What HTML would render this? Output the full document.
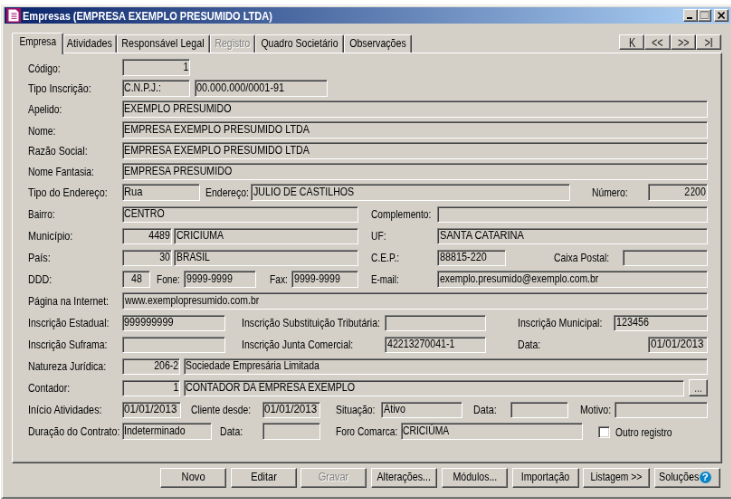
<!DOCTYPE html>
<html lang="pt-BR">
<head>
<meta charset="utf-8">
<title>Empresas (EMPRESA EXEMPLO PRESUMIDO LTDA)</title>
<style>
html,body{margin:0;padding:0;background:#fff;}
body{width:731px;height:499px;overflow:hidden;position:relative;font-family:"Liberation Sans",sans-serif;}
#scale{position:absolute;left:0;top:0;width:807.73px;height:551.38px;transform:scale(0.905);transform-origin:0 0;will-change:transform;}
#win{position:absolute;left:1.33px;top:4.86px;width:810.4px;height:546.19px;background:#d4d0c8;
 box-sizing:border-box;border:1px solid;border-color:#e8e6e0 #404040 #404040 #e8e6e0;
 box-shadow:inset 1px 1px 0 #fff, inset -1px -1px 0 #808080;}
#title{position:absolute;left:4.53px;top:8.18px;width:802.1px;height:18.12px;
 background:linear-gradient(to right,#0a246a 0%,#a6caf0 94%);}
#title .tt{position:absolute;left:20.22px;top:1.8px;color:#fff;font-weight:bold;font-size:12.5px;line-height:16px;white-space:nowrap;
 transform:scaleX(0.883);transform-origin:0 50%;}
#icon{position:absolute;left:2.32px;top:1px;width:16px;height:16px;}
.cap{position:absolute;top:1.76px;width:15.8px;height:13.92px;background:#d4d0c8;box-sizing:border-box;
 border:1px solid;border-color:#fff #404040 #404040 #fff;box-shadow:inset -1px -1px 0 #808080;}
.cap svg{position:absolute;left:0;top:0;}
.t{position:absolute;font-size:13.4px;line-height:16px;height:16px;white-space:nowrap;color:#000;
 transform:scaleX(0.765);transform-origin:0 50%;}
.t.ft{transform:scaleX(0.79);}
.t.r{transform-origin:100% 50%;}
.f{position:absolute;box-sizing:border-box;background:#d4d0c8;border:1px solid;border-width:1px 1.6px 1.6px 1px;border-color:#808080 #fff #fff #808080;
 box-shadow:inset 1px 1px 0 #404040;}
.cb{position:absolute;box-sizing:border-box;width:13px;height:13px;background:#fff;border:1px solid;border-color:#808080 #fff #fff #808080;
 box-shadow:inset 1px 1px 0 #404040, inset -1px -1px 0 #d4d0c8;}
.btn{position:absolute;box-sizing:border-box;background:#d4d0c8;border:1px solid;border-color:#fff #404040 #404040 #fff;
 box-shadow:inset -1px -1px 0 #808080;display:flex;justify-content:center;align-items:flex-start;}
.bt{flex:none;display:inline-block;position:relative;font-size:13.4px;line-height:16px;white-space:nowrap;transform:scaleX(0.765);transform-origin:50% 50%;color:#000;}
.btn .bt{top:1.5px;}
.btn.dis .bt,.tab.dis .bt{color:#808080;text-shadow:1px 1px 0 #fff;}
.nav .bt{top:-0.2px;font-size:14px;color:#222;}
.pipe{display:inline-block;font-size:10.8px;font-weight:bold;position:relative;top:-2.1px;margin-left:0.6px;}
.tab{position:absolute;box-sizing:border-box;background:#d4d0c8;border:1px solid;border-color:#fff #404040 transparent #fff;border-bottom:0;
 border-radius:2px 2px 0 0;box-shadow:inset -1px 0 0 #808080;display:flex;justify-content:center;align-items:flex-start;}
.tab .bt{top:1px;}
.tab.act{z-index:3;}
.tab.act .bt{top:1.8px;}
#panel{position:absolute;left:13.15px;top:58.45px;width:784.42px;height:453.7px;box-sizing:border-box;
 border:1px solid;border-color:#fff #404040 #404040 #fff;box-shadow:inset -1px -1px 0 #808080;z-index:2;}
.help{position:absolute;left:49.2px;top:3.8px;width:13px;height:13px;border-radius:50%;background:#0c86c9;color:#fff;font-weight:bold;font-size:11.5px;line-height:13.5px;text-align:center;}
</style>
</head>
<body>
<div id="scale">
<div id="win"></div>
<div id="title">
<svg id="icon" viewBox="0 0 16 16"><rect x="0" y="0" width="16" height="16" fill="#a4126a"/><path d="M2.5 1.5h8l3 3v10h-11z" fill="#fff"/><path d="M5.5 5.5h6M5.5 7.5h6M5.5 9.5h6M5.5 11.5h6" stroke="#b8438c" stroke-width="1.2"/></svg>
<div class="tt">Empresas (EMPRESA EXEMPLO PRESUMIDO LTDA)</div>
<div class="cap" style="left:750.39px"><svg width="14" height="12" viewBox="0 0 14 12"><rect x="3" y="8" width="6" height="2" fill="#000"/></svg></div>
<div class="cap" style="left:766.08px"><svg width="14" height="12" viewBox="0 0 14 12"><path d="M2.5 2h9v8h-9z" fill="none" stroke="#fff" stroke-width="1"/><path d="M2 1.5h9v8h-9z" fill="none" stroke="#808080" stroke-width="1"/><rect x="2" y="1" width="9" height="1.6" fill="#808080"/></svg></div>
<div class="cap" style="left:784.31px"><svg width="14" height="12" viewBox="0 0 14 12"><path d="M3.5 2.5l7 7M10.5 2.5l-7 7" stroke="#000" stroke-width="1.7"/></svg></div>
</div>
<div class="tab act" style="left:13.15px;top:35.69px;width:56.68px;height:24.2px"><span class="bt" style="transform:scaleX(0.7542)">Empresa</span></div>
<div class="tab" style="left:69.83px;top:38.12px;width:59.01px;height:20.33px"><span class="bt" style="transform:scaleX(0.8114)">Atividades</span></div>
<div class="tab" style="left:128.84px;top:38.12px;width:102.98px;height:20.33px"><span class="bt" style="transform:scaleX(0.8037)">Responsável Legal</span></div>
<div class="tab dis" style="left:231.82px;top:38.12px;width:50.61px;height:20.33px"><span class="bt" style="transform:scaleX(0.7773)">Registro</span></div>
<div class="tab" style="left:282.43px;top:38.12px;width:97.46px;height:20.33px"><span class="bt" style="transform:scaleX(0.7888)">Quadro Societário</span></div>
<div class="tab" style="left:379.89px;top:38.12px;width:75.14px;height:20.33px"><span class="bt" style="transform:scaleX(0.7922)">Observações</span></div>
<div id="panel"></div>
<div id="content" style="position:absolute;left:0;top:0;width:807.73px;height:551.38px;z-index:4">
<div class="t " style="left:31.27px;top:67.54px;transform:scaleX(0.7703);">Código:</div>
<div class="f" style="left:134.81px;top:65.36px;width:75.25px;height:18.67px"></div>
<div class="t r ft" style="right:599.55px;top:65.89px;">1</div>
<div class="t " style="left:31.27px;top:90.47px;transform:scaleX(0.8048);">Tipo Inscrição:</div>
<div class="f" style="left:134.81px;top:88.29px;width:75.25px;height:18.67px"></div>
<div class="t ft" style="left:137.46px;top:88.82px;">C.N.P.J.:</div>
<div class="f" style="left:214.59px;top:88.29px;width:147.18px;height:18.67px"></div>
<div class="t ft" style="left:217.24px;top:88.82px;transform:scaleX(0.8096);">00.000.000/0001-91</div>
<div class="t " style="left:31.27px;top:113.35px;transform:scaleX(0.7712);">Apelido:</div>
<div class="f" style="left:134.81px;top:111.16px;width:646.85px;height:18.67px"></div>
<div class="t ft" style="left:137.46px;top:111.69px;transform:scaleX(0.7922);">EXEMPLO PRESUMIDO</div>
<div class="t " style="left:31.27px;top:136.5px;transform:scaleX(0.7699);">Nome:</div>
<div class="f" style="left:134.81px;top:134.31px;width:646.85px;height:18.67px"></div>
<div class="t ft" style="left:137.46px;top:134.84px;transform:scaleX(0.8037);">EMPRESA EXEMPLO PRESUMIDO LTDA</div>
<div class="t " style="left:31.27px;top:159.42px;transform:scaleX(0.7939);">Razão Social:</div>
<div class="f" style="left:134.81px;top:157.24px;width:646.85px;height:18.67px"></div>
<div class="t ft" style="left:137.46px;top:157.77px;transform:scaleX(0.8037);">EMPRESA EXEMPLO PRESUMIDO LTDA</div>
<div class="t " style="left:31.27px;top:182.35px;transform:scaleX(0.7722);">Nome Fantasia:</div>
<div class="f" style="left:134.81px;top:180.17px;width:646.85px;height:18.67px"></div>
<div class="t ft" style="left:137.46px;top:180.69px;transform:scaleX(0.7973);">EMPRESA PRESUMIDO</div>
<div class="t " style="left:31.27px;top:205.28px;transform:scaleX(0.8048);">Tipo do Endereço:</div>
<div class="f" style="left:134.81px;top:203.09px;width:86.07px;height:18.67px"></div>
<div class="t ft" style="left:137.46px;top:203.62px;transform:scaleX(0.8361);">Rua</div>
<div class="t " style="left:226.52px;top:205.28px;transform:scaleX(0.785);">Endereço:</div>
<div class="f" style="left:277.35px;top:203.09px;width:352.37px;height:18.67px"></div>
<div class="t ft" style="left:280.0px;top:203.62px;transform:scaleX(0.7949);">JULIO DE CASTILHOS</div>
<div class="t " style="left:653.92px;top:205.28px;transform:scaleX(0.772);">Número:</div>
<div class="f" style="left:716.24px;top:203.09px;width:65.42px;height:18.67px"></div>
<div class="t r ft" style="right:27.95px;top:203.62px;">2200</div>
<div class="t " style="left:31.27px;top:229.31px;transform:scaleX(0.7475);">Bairro:</div>
<div class="f" style="left:134.81px;top:227.57px;width:261.43px;height:18.67px"></div>
<div class="t ft" style="left:137.46px;top:228.1px;transform:scaleX(0.789);">CENTRO</div>
<div class="t " style="left:409.72px;top:229.31px;transform:scaleX(0.7621);">Complemento:</div>
<div class="f" style="left:483.09px;top:227.57px;width:298.57px;height:18.67px"></div>
<div class="t " style="left:31.27px;top:253.35px;transform:scaleX(0.8087);">Município:</div>
<div class="f" style="left:134.81px;top:251.6px;width:55.13px;height:18.67px"></div>
<div class="t r ft" style="right:619.66px;top:252.13px;">4489</div>
<div class="f" style="left:192.49px;top:251.6px;width:203.75px;height:18.67px"></div>
<div class="t ft" style="left:195.14px;top:252.13px;transform:scaleX(0.7855);">CRICIUMA</div>
<div class="t " style="left:409.72px;top:253.35px;">UF:</div>
<div class="f" style="left:483.09px;top:251.6px;width:298.57px;height:18.67px"></div>
<div class="t ft" style="left:485.75px;top:252.13px;transform:scaleX(0.8275);">SANTA CATARINA</div>
<div class="t " style="left:31.27px;top:277.38px;transform:scaleX(0.8142);">País:</div>
<div class="f" style="left:134.81px;top:275.64px;width:55.13px;height:18.67px"></div>
<div class="t r ft" style="right:619.66px;top:276.16px;">30</div>
<div class="f" style="left:192.49px;top:275.64px;width:203.75px;height:18.67px"></div>
<div class="t ft" style="left:195.14px;top:276.16px;transform:scaleX(0.7742);">BRASIL</div>
<div class="t " style="left:409.72px;top:277.38px;">C.E.P.:</div>
<div class="f" style="left:483.09px;top:275.64px;width:75.58px;height:18.67px"></div>
<div class="t ft" style="left:485.75px;top:276.16px;transform:scaleX(0.8087);">88815-220</div>
<div class="t " style="left:611.6px;top:277.38px;transform:scaleX(0.7754);">Caixa Postal:</div>
<div class="f" style="left:688.07px;top:275.64px;width:93.59px;height:18.67px"></div>
<div class="t " style="left:31.27px;top:301.14px;transform:scaleX(0.8029);">DDD:</div>
<div class="f" style="left:134.81px;top:299.39px;width:30.83px;height:18.67px"></div>
<div class="t ft" style="left:150.5px;top:299.92px;transform-origin:50% 50%;transform:translateX(-50%) scaleX(0.79);">48</div>
<div class="t " style="left:173.48px;top:301.14px;transform:scaleX(0.7546);">Fone:</div>
<div class="f" style="left:203.31px;top:299.39px;width:79.67px;height:18.67px"></div>
<div class="t ft" style="left:205.97px;top:299.92px;transform:scaleX(0.7932);">9999-9999</div>
<div class="t " style="left:297.79px;top:301.14px;">Fax:</div>
<div class="f" style="left:322.1px;top:299.39px;width:74.14px;height:18.67px"></div>
<div class="t ft" style="left:324.75px;top:299.92px;transform:scaleX(0.7932);">9999-9999</div>
<div class="t " style="left:409.72px;top:301.14px;transform:scaleX(0.7368);">E-mail:</div>
<div class="f" style="left:483.09px;top:299.39px;width:298.57px;height:18.67px"></div>
<div class="t ft" style="left:485.75px;top:299.92px;transform:scaleX(0.7764);">exemplo.presumido@exemplo.com.br</div>
<div class="t " style="left:31.27px;top:325.17px;transform:scaleX(0.7865);">Página na Internet:</div>
<div class="f" style="left:134.81px;top:323.43px;width:646.85px;height:18.67px"></div>
<div class="t ft" style="left:138.45px;top:323.95px;transform:scaleX(0.7808);">www.exemplopresumido.com.br</div>
<div class="t " style="left:31.27px;top:348.93px;transform:scaleX(0.7915);">Inscrição Estadual:</div>
<div class="f" style="left:134.81px;top:347.62px;width:114.47px;height:18.67px"></div>
<div class="t ft" style="left:137.46px;top:348.15px;transform:scaleX(0.8138);">999999999</div>
<div class="t " style="left:266.63px;top:348.93px;transform:scaleX(0.7909);">Inscrição Substituição Tributária:</div>
<div class="f" style="left:425.08px;top:347.62px;width:112.38px;height:18.67px"></div>
<div class="t " style="left:572.15px;top:348.93px;transform:scaleX(0.7944);">Inscrição Municipal:</div>
<div class="f" style="left:678.12px;top:347.62px;width:103.54px;height:18.67px"></div>
<div class="t ft" style="left:680.77px;top:348.15px;transform:scaleX(0.8056);">123456</div>
<div class="t " style="left:31.27px;top:372.96px;transform:scaleX(0.7834);">Inscrição Suframa:</div>
<div class="f" style="left:134.81px;top:371.66px;width:114.47px;height:18.67px"></div>
<div class="t " style="left:266.63px;top:372.96px;transform:scaleX(0.781);">Inscrição Junta Comercial:</div>
<div class="f" style="left:425.08px;top:371.66px;width:112.38px;height:18.67px"></div>
<div class="t ft" style="left:427.73px;top:372.19px;transform:scaleX(0.7932);">42213270041-1</div>
<div class="t " style="left:572.15px;top:372.96px;transform:scaleX(0.7901);">Data:</div>
<div class="f" style="left:716.46px;top:371.66px;width:65.2px;height:18.67px"></div>
<div class="t ft" style="left:719.12px;top:372.19px;transform:scaleX(0.8716);">01/01/2013</div>
<div class="t " style="left:31.27px;top:397.27px;transform:scaleX(0.7936);">Natureza Jurídica:</div>
<div class="f" style="left:134.81px;top:395.52px;width:64.2px;height:18.67px"></div>
<div class="t r ft" style="right:610.6px;top:396.05px;">206-2</div>
<div class="f" style="left:202.76px;top:395.52px;width:578.9px;height:18.67px"></div>
<div class="t ft" style="left:205.41px;top:396.05px;transform:scaleX(0.7789);">Sociedade Empresária Limitada</div>
<div class="t " style="left:31.27px;top:421.3px;transform:scaleX(0.783);">Contador:</div>
<div class="f" style="left:134.81px;top:419.56px;width:64.2px;height:18.67px"></div>
<div class="t r ft" style="right:610.6px;top:420.09px;">1</div>
<div class="f" style="left:202.76px;top:419.56px;width:553.48px;height:18.67px"></div>
<div class="t ft" style="left:205.41px;top:420.09px;transform:scaleX(0.7989);">CONTADOR DA EMPRESA EXEMPLO</div>
<div class="t " style="left:31.27px;top:445.33px;transform:scaleX(0.812);">Início Atividades:</div>
<div class="f" style="left:134.81px;top:443.59px;width:64.75px;height:18.67px"></div>
<div class="t ft" style="left:137.46px;top:444.12px;transform:scaleX(0.8732);">01/01/2013</div>
<div class="t " style="left:210.5px;top:445.33px;transform:scaleX(0.7726);">Cliente desde:</div>
<div class="f" style="left:289.72px;top:443.59px;width:63.98px;height:18.67px"></div>
<div class="t ft" style="left:292.38px;top:444.12px;transform:scaleX(0.8699);">01/01/2013</div>
<div class="t " style="left:370.72px;top:445.33px;transform:scaleX(0.7792);">Situação:</div>
<div class="f" style="left:420.99px;top:443.59px;width:89.73px;height:18.67px"></div>
<div class="t ft" style="left:423.65px;top:444.12px;transform:scaleX(0.8012);">Ativo</div>
<div class="t " style="left:522.65px;top:445.33px;transform:scaleX(0.8073);">Data:</div>
<div class="f" style="left:563.54px;top:443.59px;width:64.19px;height:18.67px"></div>
<div class="t " style="left:640.88px;top:445.33px;transform:scaleX(0.7905);">Motivo:</div>
<div class="f" style="left:678.9px;top:443.59px;width:102.76px;height:18.67px"></div>
<div class="t " style="left:31.27px;top:469.09px;transform:scaleX(0.7917);">Duração do Contrato:</div>
<div class="f" style="left:134.81px;top:467.35px;width:99.33px;height:18.67px"></div>
<div class="t ft" style="left:137.46px;top:467.88px;transform:scaleX(0.7894);">Indeterminado</div>
<div class="t " style="left:242.54px;top:469.09px;transform:scaleX(0.7901);">Data:</div>
<div class="f" style="left:289.72px;top:467.35px;width:63.98px;height:18.67px"></div>
<div class="t " style="left:370.72px;top:469.09px;">Foro Comarca:</div>
<div class="f" style="left:442.76px;top:467.35px;width:201.55px;height:18.67px"></div>
<div class="t ft" style="left:445.41px;top:467.88px;transform:scaleX(0.7738);">CRICIÚMA</div>
<div class="cb" style="left:660.99px;top:470.94px"></div>
<div class="t " style="left:680.22px;top:469.64px;transform:scaleX(0.7634);">Outro registro</div>
<div class="btn" style="left:760.88px;top:419.45px;width:20.67px;height:19.0px"><span class="bt" style="top:1px;color:#333">...</span></div>
</div>
<div class="btn nav" style="left:684.42px;top:38.12px;width:28.07px;height:16.91px"><span class="bt">K</span></div>
<div class="btn nav" style="left:712.49px;top:38.12px;width:28.17px;height:16.91px"><span class="bt">&lt;&lt;</span></div>
<div class="btn nav" style="left:740.66px;top:38.12px;width:28.07px;height:16.91px"><span class="bt">&gt;&gt;</span></div>
<div class="btn nav" style="left:768.73px;top:38.12px;width:28.18px;height:16.91px"><span class="bt">&gt;<span class="pipe">|</span></span></div>
<div class="btn" style="left:176.8px;top:516.69px;width:73.26px;height:22.76px"><span class="bt" style="transform:scaleX(0.8336)">Novo</span></div>
<div class="btn" style="left:254.7px;top:516.69px;width:73.26px;height:22.76px"><span class="bt" style="transform:scaleX(0.8175)">Editar</span></div>
<div class="btn dis" style="left:332.04px;top:516.69px;width:73.26px;height:22.76px"><span class="bt" style="transform:scaleX(0.8202)">Gravar</span></div>
<div class="btn" style="left:409.72px;top:516.69px;width:73.15px;height:22.76px"><span class="bt" style="transform:scaleX(0.7997)">Alterações...</span></div>
<div class="btn" style="left:488.07px;top:516.69px;width:73.26px;height:22.76px"><span class="bt" style="transform:scaleX(0.7883)">Módulos...</span></div>
<div class="btn" style="left:566.3px;top:516.69px;width:73.26px;height:22.76px"><span class="bt" style="transform:scaleX(0.8011)">Importação</span></div>
<div class="btn" style="left:644.09px;top:516.69px;width:73.48px;height:22.76px"><span class="bt" style="transform:scaleX(0.7701)">Listagem &gt;&gt;</span></div>
<div class="btn" style="left:722.65px;top:516.69px;width:73.15px;height:22.76px"><span class="bt" style="position:absolute;left:4.2px;transform-origin:0 50%;transform:scaleX(0.8058)">Soluções</span><span class="help">?</span></div>
</div>
</body>
</html>
